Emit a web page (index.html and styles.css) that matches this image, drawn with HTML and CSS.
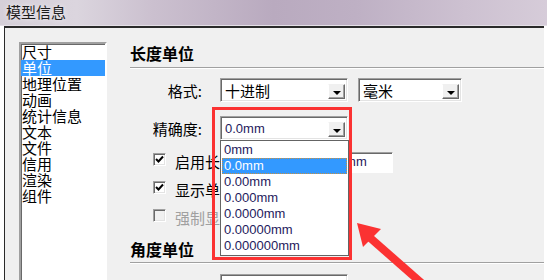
FILE: index.html
```html
<!DOCTYPE html>
<html lang="zh-CN">
<head>
  <meta charset="UTF-8">
  <meta name="viewport" content="width=device-width, initial-scale=1.0">
  <title>模型信息</title>
  <link rel="stylesheet" href="styles.css">
</head>
<body>
  <div class="titlebar">模型信息</div>

  <div class="dialog">
    <ul class="nav">
      <li>尺寸</li>
      <li class="active">单位</li>
      <li>地理位置</li>
      <li>动画</li>
      <li>统计信息</li>
      <li>文本</li>
      <li>文件</li>
      <li>信用</li>
      <li>渲染</li>
      <li>组件</li>
    </ul>

    <div class="panel">
      <div class="section-title">长度单位</div>

      <div class="field-row row-format">
        <span class="field-label">格式:</span>
        <div class="combo combo-wide"><span class="combo-text">十进制</span><span class="combo-btn"></span></div>
        <div class="combo combo-unit"><span class="combo-text">毫米</span><span class="combo-btn"></span></div>
      </div>

      <div class="field-row row-precision">
        <span class="field-label">精确度:</span>
        <div class="combo-wrap">
          <div class="combo combo-wide"><span class="combo-text num">0.0mm</span><span class="combo-btn"></span></div>
          <ul class="droplist">
            <li>0mm</li>
            <li class="active">0.0mm</li>
            <li>0.00mm</li>
            <li>0.000mm</li>
            <li>0.0000mm</li>
            <li>0.00000mm</li>
            <li>0.000000mm</li>
          </ul>
          <div class="mark-box"></div>
        </div>
      </div>

      <div class="check-row row-first">
        <span class="checkbox"><svg width="13" height="13" viewBox="0 0 13 13"><polyline points="3,6 5.5,8.5 10,3.5" fill="none" stroke="#000" stroke-width="2"/></svg></span>
        <span class="check-label">启用长度单位缩放</span>
        <div class="textbox">0.0mm</div>
      </div>
      <div class="check-row">
        <span class="checkbox"><svg width="13" height="13" viewBox="0 0 13 13"><polyline points="3,6 5.5,8.5 10,3.5" fill="none" stroke="#000" stroke-width="2"/></svg></span>
        <span class="check-label">显示单位后缀</span>
      </div>
      <div class="check-row disabled">
        <span class="checkbox"></span>
        <span class="check-label">强制显示单位</span>
      </div>

      <div class="section-title second">角度单位</div>

      <div class="field-row row-angle">
        <span class="field-label">精确度:</span>
        <div class="combo combo-wide"><span class="combo-text num"></span><span class="combo-btn"></span></div>
      </div>
    </div>
  </div>

  <svg class="arrow" width="547" height="280" viewBox="0 0 547 280">
    <line x1="368" y1="236" x2="434" y2="294" stroke="#fb3232" stroke-width="8"/>
    <polygon points="357,223 381,229 363,247" fill="#fb3232"/>
  </svg>
</body>
</html>
```

FILE: styles.css
```css
body {
  margin: 0;
  width: 547px;
  height: 280px;
  overflow: hidden;
  position: relative;
  background: #ffffff;
  font-family: "Noto Sans CJK SC", sans-serif;
  color: #000;
}

ul {
  list-style: none;
  margin: 0;
  padding: 0;
}

.titlebar {
  height: 25px;
  border-bottom: 1px solid #e4dfe6;
  padding-left: 6px;
  font-size: 15px;
  line-height: 23px;
  color: #1c1c1c;
  text-shadow: 0 0 5px rgba(255, 255, 255, 0.8);
  background: linear-gradient(90deg, #d5cfd8 0%, #dbd5de 14%, #cbc0cf 28%, #b9aabf 50%, #beb0c4 65%, #cdc1d1 85%, #d6ccd9 100%);
}

.dialog {
  display: flex;
  align-items: flex-start;
  margin-left: 4px;
  width: 539px;
  height: 256px;
  border-top: 2px solid #2a2a2a;
  border-left: 1px solid #2a2a2a;
  background: #f0f0f0;
}

/* left list */
.nav {
  margin: 14px 0 0 14px;
  width: 84px;
  height: 240px;
  background: #fff;
  border: 2px solid;
  border-color: #a0a0a0 #ffffff #ffffff #a0a0a0;
  box-shadow: inset 1px 1px 0 #696969;
  font-size: 15px;
  line-height: 16px;
}

.nav li {
  padding-left: 1px;
  height: 16px;
  white-space: nowrap;
}

.nav li.active {
  background: #3399ff;
  color: #fff;
}

/* right panel */
.panel {
  flex: 1;
  margin: 15px 0 0 23px;
}

.section-title {
  font-size: 16px;
  font-weight: bold;
  line-height: 20px;
  padding-bottom: 4px;
  border-bottom: 1px solid #a0a0a0;
  box-shadow: 0 1px 0 #ffffff;
}

.section-title.second {
  margin-top: 10px;
  padding-bottom: 3px;
}

.field-row {
  display: flex;
  align-items: center;
  height: 24px;
}

.row-format {
  margin-top: 10px;
}

.row-precision {
  margin-top: 14px;
}

.row-angle {
  margin-top: 11px;
}

.field-label {
  width: 72px;
  margin-right: 18px;
  text-align: right;
  font-size: 15px;
  white-space: nowrap;
}

.combo {
  display: flex;
  align-items: stretch;
  box-sizing: border-box;
  height: 24px;
  background: #fff;
  border: 1px solid;
  border-color: #a0a0a0 #ffffff #ffffff #a0a0a0;
  box-shadow: inset 1px 1px 0 #696969, inset -1px -1px 0 #e3e3e3;
  padding: 2px 2px 2px 4px;
}

.combo-wide {
  width: 128px;
}

.combo-unit {
  width: 104px;
  margin-left: 10px;
}

.combo-text {
  flex: 1;
  font-size: 15px;
  line-height: 19px;
  white-space: nowrap;
}

.combo-text.num {
  font-family: "Liberation Sans", sans-serif;
  font-size: 13px;
  color: #1e1a5c;
}

.combo-btn {
  position: relative;
  width: 17px;
  box-sizing: border-box;
  background: #f0f0f0;
  border: 1px solid;
  border-color: #f0f0f0 #696969 #696969 #ffffff;
  box-shadow: inset -1px -1px 0 #a0a0a0;
  margin-top: 3px;
}

.combo-btn::after {
  content: "";
  position: absolute;
  left: 4px;
  top: 6px;
  border-left: 4px solid transparent;
  border-right: 4px solid transparent;
  border-top: 4px solid #000;
}

/* open dropdown */
.combo-wrap {
  position: relative;
}

.droplist {
  position: absolute;
  left: 0;
  top: 24px;
  z-index: 2;
  box-sizing: border-box;
  width: 129px;
  padding: 1px;
  background: #fff;
  border: 1px solid #646464;
  font-family: "Liberation Sans", sans-serif;
  font-size: 13px;
  line-height: 16px;
  color: #1e1a5c;
}

.droplist li {
  height: 16px;
  padding-left: 2px;
}

.droplist li.active {
  background: #3399ff;
  color: #fff;
  outline: 1px dotted #c89040;
  outline-offset: -1px;
}

.mark-box {
  position: absolute;
  left: -8px;
  top: -9px;
  z-index: 3;
  width: 134px;
  height: 147px;
  border: 3px solid #fb3232;
}

/* checkboxes */
.check-row {
  display: flex;
  align-items: flex-start;
  height: 21px;
  margin-top: 7px;
  margin-left: 23px;
}

.check-row.row-first {
  margin-top: 12px;
}

.checkbox {
  width: 13px;
  height: 13px;
  box-sizing: border-box;
  margin-top: 1px;
  background: #fff;
  border: 1px solid;
  border-color: #a0a0a0 #ffffff #ffffff #a0a0a0;
  box-shadow: inset 1px 1px 0 #696969, inset -1px -1px 0 #e3e3e3;
  position: relative;
}

.checkbox svg {
  position: absolute;
  left: -1px;
  top: -1px;
}

.check-label {
  margin: 2px 0 0 9px;
  font-size: 15px;
  line-height: 16px;
  white-space: nowrap;
}

.check-row.disabled .check-label {
  color: #a0a0a0;
}

.check-row.disabled .checkbox {
  background: #f0f0f0;
}

.textbox {
  box-sizing: border-box;
  width: 71px;
  height: 21px;
  margin-left: 27px;
  padding-left: 4px;
  background: #fff;
  border: 1px solid;
  border-color: #a0a0a0 #ffffff #ffffff #a0a0a0;
  box-shadow: inset 1px 1px 0 #696969;
  font-family: "Liberation Sans", sans-serif;
  font-size: 13px;
  line-height: 18px;
  color: #1e1a5c;
}

.arrow {
  position: absolute;
  left: 0;
  top: 0;
  z-index: 5;
  pointer-events: none;
}
```
